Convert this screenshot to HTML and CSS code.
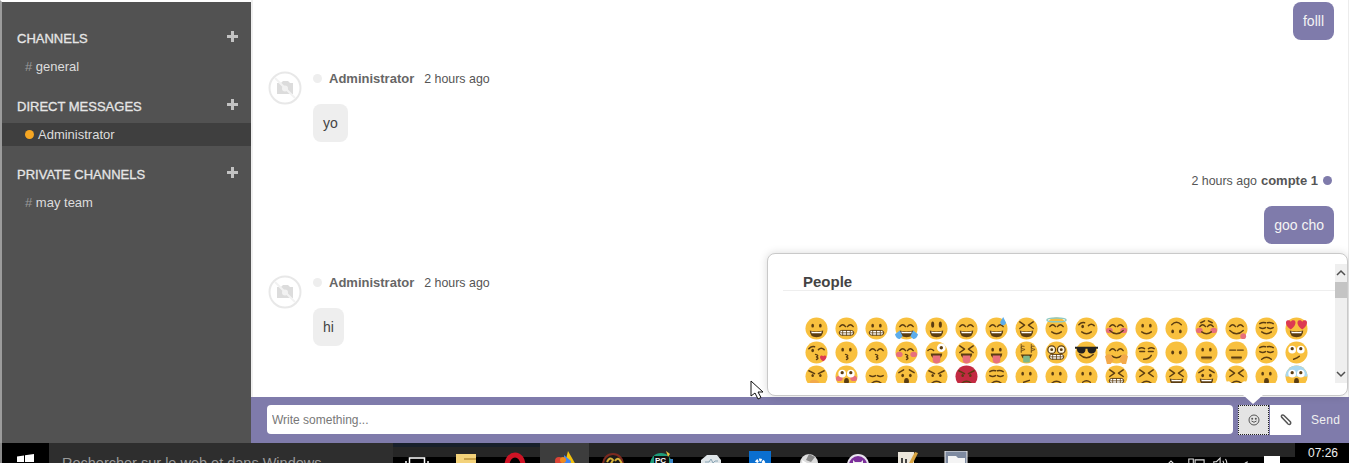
FILE: index.html
```html
<!doctype html>
<html lang="en">
<head>
    <meta charset="UTF-8">
    <meta name="viewport" content="width=device-width, initial-scale=1.0">
    <title>Chat</title>
    <link rel="stylesheet" href="styles.css">
</head>
<body>
<!-- shared emoji parts -->
<svg class="defs" aria-hidden="true">
    <symbol id="f" viewBox="0 0 24 24"><circle class="skin" cx="12" cy="12" r="11.5"/></symbol>
    <symbol id="e-dot" viewBox="0 0 24 24"><ellipse class="ink" cx="8" cy="9" rx="1.4" ry="2"/><ellipse class="ink" cx="16" cy="9" rx="1.4" ry="2"/></symbol>
    <symbol id="e-tall" viewBox="0 0 24 24"><ellipse class="ink" cx="8" cy="8" rx="1.6" ry="3.2"/><ellipse class="ink" cx="16" cy="8" rx="1.6" ry="3.2"/></symbol>
    <symbol id="e-arc" viewBox="0 0 24 24"><path class="line" d="M5 10q3-4 6 0M13 10q3-4 6 0"/></symbol>
    <symbol id="e-x" viewBox="0 0 24 24"><path class="line" d="M5 5l5 3.5-5 3.5M19 5l-5 3.5 5 3.5"/></symbol>
    <symbol id="e-wink" viewBox="0 0 24 24"><path class="line" d="M4 8q3-3 6-2M14 9q3-3 6 0"/><ellipse class="ink" cx="8" cy="10" rx="1.4" ry="1.8"/></symbol>
    <symbol id="e-flat" viewBox="0 0 24 24"><path class="line" d="M5 9.500h6M13 9.500h6"/></symbol>
    <symbol id="e-calm" viewBox="0 0 24 24"><path class="line" d="M5 7q3-2 6-1M19 7q-3-2-6-1M5 11q3 2 6 0M13 11q3 2 6 0"/></symbol>
    <symbol id="e-sad" viewBox="0 0 24 24"><path class="line" d="M4 8l5-3M20 8l-5-3"/><ellipse class="ink" cx="8" cy="11" rx="1.4" ry="1.8"/><ellipse class="ink" cx="16" cy="11" rx="1.4" ry="1.8"/></symbol>
    <symbol id="e-mad" viewBox="0 0 24 24"><path class="line" d="M4 6l6 3M20 6l-6 3"/><ellipse class="ink" cx="8" cy="11" rx="1.3" ry="1.6"/><ellipse class="ink" cx="16" cy="11" rx="1.3" ry="1.6"/></symbol>
    <symbol id="e-big" viewBox="0 0 24 24"><circle class="white" cx="7.500" cy="9" r="4"/><circle class="white" cx="16.500" cy="9" r="4"/><circle class="ink" cx="7.500" cy="8" r="1.700"/><circle class="ink" cx="16.500" cy="8" r="1.700"/></symbol>
    <symbol id="c-pink" viewBox="0 0 24 24"><ellipse class="pink" cx="4.500" cy="14" rx="3.500" ry="2.800"/><ellipse class="pink" cx="19.500" cy="14" rx="3.500" ry="2.800"/></symbol>
    <symbol id="m-open" viewBox="0 0 24 24"><path class="ink" d="M5 14q7 2 14 0q0 7-7 7t-7-7z"/><path class="white" d="M6.500 15q5.500 1.500 11 0l-.5 2h-10z"/></symbol>
    <symbol id="m-teeth" viewBox="0 0 24 24"><rect class="white teeth" x="4.500" y="14" width="15" height="5" rx="2.500"/><path class="line thin" d="M4.500 16.500h15M8 14v5M12 14v5M16 14v5"/></symbol>
    <symbol id="m-smile" viewBox="0 0 24 24"><path class="line" d="M7 15.500q5 4 10 0"/></symbol>
    <symbol id="m-wide" viewBox="0 0 24 24"><path class="line" d="M5 14q7 7 14 0"/></symbol>
    <symbol id="m-kiss" viewBox="0 0 24 24"><path class="line" d="M11 14q4 1 1 2.500q3 1.500 0 2.800"/></symbol>
    <symbol id="m-tongue" viewBox="0 0 24 24"><path class="ink" d="M6 13h12q0 3-2 4.500H8q-2-1.500-2-4.500z"/><path class="pink" d="M8 15h8v4.500a4 4 0 0 1-8 0z"/></symbol>
    <symbol id="m-line" viewBox="0 0 24 24"><path class="line" d="M8 17h8"/></symbol>
    <symbol id="m-zip" viewBox="0 0 24 24"><path class="line" d="M7 17h10"/><path class="line thin" d="M7 18.500h10"/></symbol>
    <symbol id="m-frown" viewBox="0 0 24 24"><path class="line" d="M7 19q5-4 10 0"/></symbol>
    <symbol id="m-oh" viewBox="0 0 24 24"><ellipse class="ink" cx="12" cy="17" rx="2.500" ry="3.500"/></symbol>
</svg>

<div class="app">
    <aside class="sidebar">
        <section class="side-group">
            <h3 class="side-title">CHANNELS <svg class="plus" viewBox="0 0 11 11"><path d="M4 0h3v4h4v3H7v4H4V7H0V4h4z"/></svg></h3>
            <div class="side-item"><span class="hash">#</span> general</div>
        </section>
        <section class="side-group">
            <h3 class="side-title">DIRECT MESSAGES <svg class="plus" viewBox="0 0 11 11"><path d="M4 0h3v4h4v3H7v4H4V7H0V4h4z"/></svg></h3>
            <div class="side-item active"><span class="status"></span>Administrator</div>
        </section>
        <section class="side-group">
            <h3 class="side-title">PRIVATE CHANNELS <svg class="plus" viewBox="0 0 11 11"><path d="M4 0h3v4h4v3H7v4H4V7H0V4h4z"/></svg></h3>
            <div class="side-item"><span class="hash">#</span> may team</div>
        </section>
    </aside>

    <main class="main">
        <div class="messages">
            <div class="msg mine first">
                <div class="bubble">folll</div>
            </div>

            <div class="msg theirs">
                <svg class="avatar" viewBox="0 0 34 34"><use href="#noavatar"/></svg>
                <div class="msg-body">
                    <div class="meta"><span class="dot"></span><b class="who">Administrator</b><span class="when">2 hours ago</span></div>
                    <div class="bubble">yo</div>
                </div>
            </div>

            <div class="msg mine">
                <div class="meta"><span class="when">2 hours ago</span><b class="who">compte 1</b><span class="dot"></span></div>
                <div class="bubble">goo cho</div>
            </div>

            <div class="msg theirs">
                <svg class="avatar" viewBox="0 0 34 34">
                    <defs>
                        <g id="noavatar">
                            <circle class="av-ring" cx="17" cy="17" r="15.500"/>
                            <path class="av-cam" d="M9 12h4l2-2h5l2 2h3v11H9z"/>
                            <circle class="av-lens" cx="17" cy="17.500" r="3"/>
                            <path class="av-slash" d="M7 7l20 20"/>
                        </g>
                    </defs>
                    <use href="#noavatar"/>
                </svg>
                <div class="msg-body">
                    <div class="meta"><span class="dot"></span><b class="who">Administrator</b><span class="when">2 hours ago</span></div>
                    <div class="bubble">hi</div>
                </div>
            </div>
        </div>

        <form class="composer">
            <div class="picker">
                <div class="picker-scroll">
                    <h4 class="picker-title">People</h4>
                    <div class="emoji-grid">
                        <svg class="emoji" viewBox="0 0 24 24"><use href="#f"/><use href="#e-dot"/><use href="#m-open"/></svg>
                        <svg class="emoji" viewBox="0 0 24 24"><use href="#f"/><use href="#e-arc"/><use href="#m-teeth"/></svg>
                        <svg class="emoji" viewBox="0 0 24 24"><use href="#f"/><use href="#e-dot"/><use href="#m-teeth"/></svg>
                        <svg class="emoji" viewBox="0 0 24 24"><use href="#f"/><use href="#e-arc"/><use href="#m-open"/><path class="blue" d="M0 18l5-4 3 6-3 3q-4 0-5-5zM24 18l-5-4-3 6 3 3q4 0 5-5z"/></svg>
                        <svg class="emoji" viewBox="0 0 24 24"><use href="#f"/><use href="#e-tall"/><use href="#m-open"/></svg>
                        <svg class="emoji" viewBox="0 0 24 24"><use href="#f"/><use href="#e-arc"/><use href="#m-open"/></svg>
                        <svg class="emoji" viewBox="0 0 24 24"><use href="#f"/><use href="#e-arc"/><use href="#m-open"/><path class="blue" d="M19 0l-3 5a3 3 0 0 0 6 1z"/></svg>
                        <svg class="emoji" viewBox="0 0 24 24"><use href="#f"/><use href="#e-x"/><use href="#m-open"/></svg>
                        <svg class="emoji" viewBox="0 0 24 24"><use href="#f"/><use href="#e-arc"/><use href="#m-smile"/><ellipse class="halo" cx="12" cy="3" rx="10" ry="2"/></svg>
                        <svg class="emoji" viewBox="0 0 24 24"><use href="#f"/><use href="#e-wink"/><use href="#m-smile"/></svg>
                        <svg class="emoji" viewBox="0 0 24 24"><use href="#f"/><use href="#c-pink"/><use href="#e-arc"/><use href="#m-wide"/></svg>
                        <svg class="emoji" viewBox="0 0 24 24"><use href="#f"/><use href="#e-dot"/><use href="#m-smile"/></svg>
                        <svg class="emoji" viewBox="0 0 24 24"><use href="#f"/><ellipse class="ink" cx="8" cy="15" rx="1.400" ry="2"/><ellipse class="ink" cx="16" cy="15" rx="1.400" ry="2"/><path class="line" d="M7 8q5-5 10 0"/></svg>
                        <svg class="emoji" viewBox="0 0 24 24"><use href="#f"/><use href="#c-pink"/><use href="#e-arc"/><path class="line" d="M6 6l4-2M18 6l-4-2"/><use href="#m-smile"/></svg>
                        <svg class="emoji" viewBox="0 0 24 24"><use href="#f"/><use href="#e-arc"/><use href="#m-wide"/><circle class="pink" cx="19" cy="20" r="3"/></svg>
                        <svg class="emoji" viewBox="0 0 24 24"><use href="#f"/><use href="#e-calm"/><use href="#m-smile"/></svg>
                        <svg class="emoji" viewBox="0 0 24 24"><use href="#f"/><use href="#m-open"/><path class="heart" d="M6 13C0 9 0 4 3 3.500c1.500-.3 2.500.5 3 1.500.5-1 1.500-1.800 3-1.500 3 .5 3 5.500-3 9.500zM18 13c-6-4-6-9-3-9.500 1.500-.3 2.500.5 3 1.500.5-1 1.500-1.800 3-1.500 3 .5 3 5.500-3 9.500z"/></svg>

                        <svg class="emoji" viewBox="0 0 24 24"><use href="#f"/><use href="#e-wink"/><use href="#m-kiss"/><path class="heart" d="M19 21c-4-2-4-6-2-6 1 0 1.500.5 2 1 .5-.5 1-1 2-1 2 0 2 4-2 6z"/></svg>
                        <svg class="emoji" viewBox="0 0 24 24"><use href="#f"/><use href="#e-dot"/><use href="#m-kiss"/></svg>
                        <svg class="emoji" viewBox="0 0 24 24"><use href="#f"/><use href="#e-arc"/><use href="#m-kiss"/></svg>
                        <svg class="emoji" viewBox="0 0 24 24"><use href="#f"/><use href="#c-pink"/><use href="#e-arc"/><use href="#m-kiss"/></svg>
                        <svg class="emoji" viewBox="0 0 24 24"><use href="#f"/><path class="line" d="M3 10q3-3 6 0"/><circle class="white" cx="17" cy="7" r="4.500"/><circle class="ink" cx="17" cy="7" r="1.800"/><use href="#m-tongue"/></svg>
                        <svg class="emoji" viewBox="0 0 24 24"><use href="#f"/><use href="#e-x"/><use href="#m-tongue"/></svg>
                        <svg class="emoji" viewBox="0 0 24 24"><use href="#f"/><use href="#e-dot"/><use href="#m-tongue"/></svg>
                        <svg class="emoji" viewBox="0 0 24 24"><use href="#f"/><path class="line thin" d="M9.500 5.500q-3-1-3 1t3 2-3 2M6.500 3.500v8.500M20 5.500q-3-1-3 1t3 2-3 2M17 3.500v8.500"/><path class="ink" d="M6 14h12l-2 4H8z"/><rect class="green" x="8.500" y="15.500" width="7" height="7" rx="1"/></svg>
                        <svg class="emoji" viewBox="0 0 24 24"><use href="#f"/><circle class="glass" cx="7" cy="9" r="4"/><circle class="glass" cx="17" cy="9" r="4"/><circle class="ink" cx="7" cy="9" r="1.500"/><circle class="ink" cx="17" cy="9" r="1.500"/><use href="#m-teeth"/></svg>
                        <svg class="emoji" viewBox="0 0 24 24"><use href="#f"/><path class="shades" d="M0 6h24v2l-2 0q0 5-5 5-4 0-4-5h-2q0 5-4 5-5 0-5-5H0z"/><use href="#m-wide"/></svg>
                        <svg class="emoji" viewBox="0 0 24 24"><use href="#f"/><use href="#e-arc"/><use href="#m-smile"/><path class="hand" d="M0 16q3-4 7-1l2 5-3 4H2zM24 16q-3-4-7-1l-2 5 3 4h4z"/></svg>
                        <svg class="emoji" viewBox="0 0 24 24"><use href="#f"/><path class="line" d="M4 8q3-2 6 0M14 8q3-2 6 0M5 11h5M14 11h5M9 19q6 0 8-4"/></svg>
                        <svg class="emoji" viewBox="0 0 24 24"><use href="#f"/><ellipse class="ink" cx="8" cy="12" rx="1.500" ry="2"/><ellipse class="ink" cx="16" cy="12" rx="1.500" ry="2"/></svg>
                        <svg class="emoji" viewBox="0 0 24 24"><use href="#f"/><use href="#e-dot"/><use href="#m-zip"/></svg>
                        <svg class="emoji" viewBox="0 0 24 24"><use href="#f"/><use href="#e-flat"/><use href="#m-zip"/></svg>
                        <svg class="emoji" viewBox="0 0 24 24"><use href="#f"/><use href="#e-calm"/><use href="#m-frown"/></svg>
                        <svg class="emoji" viewBox="0 0 24 24"><use href="#f"/><use href="#e-big"/><path class="line" d="M9 19q4-1 6-3"/></svg>

                        <svg class="emoji" viewBox="0 0 24 24"><use href="#f"/><use href="#e-mad"/><path class="hand" d="M5 17q4-3 9 0l3 7H7z"/></svg>
                        <svg class="emoji" viewBox="0 0 24 24"><use href="#f"/><use href="#c-pink"/><use href="#e-big"/><use href="#m-oh"/></svg>
                        <svg class="emoji" viewBox="0 0 24 24"><use href="#f"/><path class="line" d="M5 11q3 2 6 0M13 11q3 2 6 0"/><use href="#m-frown"/></svg>
                        <svg class="emoji" viewBox="0 0 24 24"><use href="#f"/><use href="#e-sad"/><use href="#m-oh"/></svg>
                        <svg class="emoji" viewBox="0 0 24 24"><use href="#f"/><use href="#e-mad"/><use href="#m-frown"/></svg>
                        <svg class="emoji" viewBox="0 0 24 24"><circle class="rage" cx="12" cy="12" r="11.500"/><use href="#e-mad"/><use href="#m-frown"/></svg>
                        <svg class="emoji" viewBox="0 0 24 24"><use href="#f"/><use href="#e-calm"/><use href="#m-frown"/></svg>
                        <svg class="emoji" viewBox="0 0 24 24"><use href="#f"/><use href="#e-dot"/><path class="line" d="M9 18l6-2"/></svg>
                        <svg class="emoji" viewBox="0 0 24 24"><use href="#f"/><use href="#e-dot"/><use href="#m-frown"/></svg>
                        <svg class="emoji" viewBox="0 0 24 24"><use href="#f"/><use href="#e-dot"/><path class="line" d="M8 18q4-3 8 0"/></svg>
                        <svg class="emoji" viewBox="0 0 24 24"><use href="#f"/><use href="#e-x"/><use href="#m-teeth"/></svg>
                        <svg class="emoji" viewBox="0 0 24 24"><use href="#f"/><use href="#e-x"/><use href="#m-frown"/></svg>
                        <svg class="emoji" viewBox="0 0 24 24"><use href="#f"/><use href="#e-x"/><use href="#m-open"/></svg>
                        <svg class="emoji" viewBox="0 0 24 24"><use href="#f"/><use href="#e-sad"/><use href="#m-open"/></svg>
                        <svg class="emoji" viewBox="0 0 24 24"><use href="#f"/><use href="#e-x"/><path class="white" d="M1 18q4-3 6 2l-3 3zM23 18q-4-3-6 2l3 3z"/><use href="#m-frown"/></svg>
                        <svg class="emoji" viewBox="0 0 24 24"><use href="#f"/><use href="#e-dot"/><use href="#m-oh"/></svg>
                        <svg class="emoji" viewBox="0 0 24 24"><use href="#f"/><path class="ice" d="M.500 12a11.500 11.500 0 0 1 23 0z"/><use href="#e-big"/><use href="#m-oh"/></svg>
                    </div>
                </div>
                <div class="picker-bar">
                    <svg class="bar-arrow" viewBox="0 0 12 12"><path d="M2 8l4-4 4 4"/></svg>
                    <div class="bar-thumb"></div>
                    <svg class="bar-arrow bottom" viewBox="0 0 12 12"><path d="M2 4l4 4 4-4"/></svg>
                </div>
            </div>
            <span class="picker-tip"></span>

            <input class="composer-input" type="text" placeholder="Write something...">
            <button class="tool on" type="button">
                <svg class="tool-icon" viewBox="0 0 12 12"><circle class="tool-line" cx="6" cy="6" r="5"/><circle cx="4.200" cy="4.800" r="1"/><circle cx="7.800" cy="4.800" r="1"/><path class="tool-line" d="M3.500 7q2.500 2.500 5 0"/></svg>
            </button>
            <button class="tool" type="button">
                <svg class="tool-icon" viewBox="0 0 12 12"><path class="tool-line clip" d="M2 3.500l6 6.500q1.500 1 2.300 0t0-2.300L4 1.500Q3 .5 2 1.200t-.3 2l6 6.300"/></svg>
            </button>
            <span class="send">Send</span>
        </form>
    </main>
</div>

<footer class="taskbar">
    <div class="start">
        <svg class="win" viewBox="0 0 17 17"><path d="M0 2.500l7-1v6.500H0zM8 1.300l9-1.300v8H8zM0 9h7v6.500l-7-1zM8 9h9v8l-9-1.300z"/></svg>
    </div>
    <div class="search">Rechercher sur le web et dans Windows</div>
    <div class="tasks">
        <div class="task"><svg viewBox="0 0 24 24"><rect class="tv" x="4.500" y="7" width="15" height="14"/><path class="tv" d="M1 10v9M23 10v9"/></svg></div>
        <div class="task"><svg viewBox="0 0 24 24"><path fill="#f3d27a" d="M2 3h20v21H2z"/><path fill="#c9a24a" d="M10 7h12v2H10z"/></svg></div>
        <div class="task"><svg viewBox="0 0 24 24"><ellipse cx="12" cy="14" rx="8" ry="10" fill="none" stroke="#cf1325" stroke-width="5"/></svg></div>
        <div class="task lit"><svg viewBox="0 0 24 24"><path fill="#f4c20d" d="M16 0l8 14v10H10z"/><path fill="#4285f4" d="M12 4l7 6-2 14H12z"/><circle fill="#db4437" cx="7" cy="10" r="4"/><circle fill="#f08a1d" cx="11" cy="9" r="3"/></svg></div>
        <div class="task"><svg viewBox="0 0 24 24"><circle cx="12" cy="13" r="10" fill="#1b1b1b" stroke="#7c2a20" stroke-width="2"/><path fill="none" stroke="#d7b13a" stroke-width="2" d="M6 11q3-6 6-2l-4 7M14 10q3-5 6 1t-4 5"/><path fill="none" stroke="#2f9d78" stroke-width="2" d="M19 18l3 4"/></svg></div>
        <div class="task"><svg viewBox="0 0 24 24"><circle cx="11" cy="13" r="11" fill="#1f9c7a"/><rect x="4" y="5" width="15" height="15" fill="#111"/><text class="pc" x="5" y="12">PC</text><path fill="#e7c23f" d="M16 0l4 3-2 3z"/><path fill="#3a86c8" d="M20 8h3v4h-3z"/></svg></div>
        <div class="task"><svg viewBox="0 0 24 24"><path fill="#dfe5e8" d="M2 9l6-5h10l4 5v15H2z"/><path fill="none" stroke="#8aa5b5" d="M6 11h4l2-3 2 4 2-2h3"/></svg></div>
        <div class="task"><svg viewBox="0 0 24 24"><rect x="1" y="0" width="22" height="24" fill="#0a6fd0"/><circle cx="12" cy="13" r="4" fill="none" stroke="#fff" stroke-width="3" stroke-dasharray="2.500 1"/></svg></div>
        <div class="task"><svg viewBox="0 0 24 24"><circle cx="12" cy="12" r="9" fill="#ddd"/><path fill="#888" d="M12 3l6 3-4 5-5-2z"/><path fill="#fff" d="M5 9l5 3-4 4z"/></svg></div>
        <div class="task"><svg viewBox="0 0 24 24"><circle cx="12" cy="14" r="11" fill="#e9e4ef"/><circle cx="12" cy="14" r="9" fill="#7c2f9b"/><path fill="#eee" d="M7 9l2 2h6l2-2v8H7z"/></svg></div>
        <div class="task"><svg viewBox="0 0 24 24"><path fill="#ece7dc" d="M3 1h16v23H3z"/><path fill="#d9a441" d="M13 14l7-13 3 1-7 14z"/><path fill="#444" d="M6 7h2v6H6zM10 8h2v6h-2z"/></svg></div>
        <div class="task"><svg viewBox="0 0 24 24"><rect x="1" y="0" width="22" height="24" fill="#7e8aa0" stroke="#eee"/><path fill="#f4f4f4" d="M4 5h8l2 2h7v14H4z"/></svg></div>
    </div>
    <div class="tray">
        <svg viewBox="0 0 12 12" class="tray-icon small"><path d="M2 8l4-4 4 4"/></svg>
        <svg viewBox="0 0 20 14" class="tray-icon"><path d="M2 2h5v12H2zM9 3h10v9H9z"/></svg>
        <svg viewBox="0 0 20 14" class="tray-icon"><path d="M2 5h3l4-4v12L5 9H2zM12 4q2 3 0 6M15 2q3 5 0 10"/></svg>
        <svg viewBox="0 0 20 14" class="tray-icon"><path d="M4 14q1-6 8-9M8 14q1-3 4-4"/></svg>
        <div class="notif"></div>
    </div>
    <div class="clock">07:26</div>
</footer>

<svg class="cursor" viewBox="0 0 14 20"><path d="M1 1v15l4-3 3 6 3-1.500-3-5.500h5z"/></svg>
</body>
</html>
```

FILE: styles.css
```css
* {
    box-sizing: border-box;
}
html, body {
    height: 100%;
}
body {
    font-family: "Liberation Sans", Arial, sans-serif;
    background-color: #ffffff;
    display: flex;
    flex-direction: column;
    margin: 0;
    overflow: hidden;
}
.defs {
    position: absolute;
    width: 0;
    height: 0;
}
.app {
    display: flex;
    height: 443px;
    flex: none;
}

/* sidebar */
.sidebar {
    width: 251px;
    flex: none;
    background-color: #525252;
    border-left: 2px solid #9c9c9c;
    border-top: 2px solid #ffffff;
    padding-top: 26px;
    color: #e2e2e2;
}
.side-group {
    margin-bottom: 18px;
}
.side-title {
    display: flex;
    align-items: center;
    justify-content: space-between;
    height: 20px;
    margin: 0 0 7px;
    padding: 0 13px 0 15px;
    font-size: 13px;
    font-weight: normal;
    -webkit-text-stroke: 0.3px #e6e6e6;
    color: #e6e6e6;
}
.plus {
    width: 11px;
    height: 11px;
    margin-top: -4px;
    fill: #c2c2c2;
}
.side-item {
    height: 23px;
    line-height: 24px;
    padding-left: 23px;
    font-size: 13px;
    color: #dddddd;
}
.side-item.active {
    background-color: #3f3f3f;
}
.hash {
    color: #9a9a9a;
}
.status {
    display: inline-block;
    width: 9px;
    height: 9px;
    margin-right: 4px;
    border-radius: 50%;
    background-color: #f5a623;
}

/* messages */
.main {
    flex: 1;
    min-width: 0;
    display: flex;
    flex-direction: column;
}
.messages {
    flex: 1;
    min-height: 0;
    border-left: 2px solid #f0f0f0;
    border-right: 1px solid #ececec;
    padding: 0 14px 0 15px;
}
.msg {
    display: flex;
    margin-top: 28px;
}
.msg.first {
    margin-top: 2px;
}
.msg.mine {
    flex-direction: column;
    align-items: flex-end;
}
.msg.theirs {
    gap: 11px;
}
.msg-body {
    display: flex;
    flex-direction: column;
    align-items: flex-start;
}
.avatar {
    width: 34px;
    height: 34px;
    margin-top: 3px;
    flex: none;
}
.av-ring {
    fill: none;
    stroke: #e8e8e8;
    stroke-width: 2;
}
.av-cam {
    fill: #dcdcdc;
}
.av-lens {
    fill: #f2f2f2;
}
.av-slash {
    stroke: #f2f2f2;
    stroke-width: 2;
}
.meta {
    display: flex;
    align-items: center;
    height: 20px;
    margin-bottom: 16px;
    font-size: 12.4px;
    color: #555555;
}
.meta .when {
    padding-top: 1px;
}
.meta .dot {
    width: 9px;
    height: 9px;
    border-radius: 50%;
    background-color: #eeeeee;
}
.msg.theirs .who {
    margin: 0 10px 0 7px;
    font-size: 13px;
    color: #666666;
}
.msg.mine .who {
    margin: 0 5px 0 4px;
    font-size: 13px;
    color: #555555;
}
.msg.mine .dot {
    margin-right: 2px;
    background-color: #7f7bab;
}
.bubble {
    height: 38px;
    line-height: 38px;
    padding: 0 10px;
    border-radius: 8px;
    font-size: 14px;
    background-color: #eeeeee;
    color: #444444;
}
.mine .bubble {
    background-color: #7f7bab;
    color: #f4f4f4;
}

/* composer */
.composer {
    position: relative;
    display: flex;
    align-items: flex-start;
    height: 46px;
    flex: none;
    padding: 8px 0 0 16px;
    background-color: #7f7bab;
}
.composer-input {
    width: 966px;
    height: 29px;
    padding: 0 5px;
    border: none;
    border-radius: 4px;
    font-family: inherit;
    font-size: 12px;
    background-color: #ffffff;
}
.composer-input::placeholder {
    color: #777777;
}
.tool {
    width: 31px;
    height: 30px;
    padding: 0;
    border: none;
    display: flex;
    align-items: center;
    justify-content: center;
    background-color: #ffffff;
}
.tool.on {
    margin-left: 5px;
    margin-right: 1px;
    background-color: #e4e4e4;
    outline: 1px dotted #222222;
    outline-offset: -1px;
}
.tool-icon {
    width: 12px;
    height: 12px;
    fill: #555555;
}
.tool-line {
    fill: none;
    stroke: #555555;
    stroke-width: 1;
}
.tool-line.clip {
    stroke-width: 1.5;
}
.send {
    margin: 0 0 0 10px;
    line-height: 30px;
    font-size: 12px;
    letter-spacing: 0.3px;
    color: #f0f0f0;
}

/* emoji picker */
.picker {
    position: absolute;
    right: 1px;
    bottom: 47px;
    display: flex;
    width: 581px;
    height: 143px;
    padding: 10px 0 0 15px;
    border: 1px solid #c9c9c9;
    border-radius: 8px;
    background-color: #ffffff;
    box-shadow: 0 0 8px rgba(0, 0, 0, 0.15);
}
.picker-scroll {
    flex: 1;
    height: 119px;
    overflow: hidden;
}
.picker-title {
    height: 27px;
    margin: 0 0 26px;
    padding: 9px 0 0 20px;
    border-bottom: 1px solid #eeeeee;
    font-size: 15px;
    color: #444444;
}
.emoji-grid {
    display: grid;
    grid-template-columns: repeat(17, 30px);
    grid-auto-rows: 24px;
    padding-left: 22px;
}
.emoji {
    width: 23px;
    height: 23px;
}
.emoji use {
    width: 24px;
    height: 24px;
}
.skin {
    fill: #f8c03e;
}
.rage {
    fill: #c32a42;
}
.ink {
    fill: #5b3d12;
}
.white {
    fill: #ffffff;
}
.pink {
    fill: #e8707c;
}
.heart {
    fill: #dd3a52;
}
.blue {
    fill: #5dadec;
}
.ice {
    fill: #a9d8f0;
}
.green {
    fill: #7fb88a;
}
.hand {
    fill: #f3a94a;
}
.halo {
    fill: none;
    stroke: #8fc9c0;
    stroke-width: 1.5;
}
.shades {
    fill: #222222;
}
.glass {
    fill: #fff6dd;
    stroke: #5b3d12;
    stroke-width: 1.3;
}
.line {
    fill: none;
    stroke: #5b3d12;
    stroke-width: 1.5;
    stroke-linecap: round;
    stroke-linejoin: round;
}
.line.thin {
    stroke-width: 0.8;
}
.teeth {
    stroke: #5b3d12;
    stroke-width: 1;
}
.picker-bar {
    display: flex;
    flex-direction: column;
    width: 12px;
    height: 119px;
    flex: none;
    background-color: #efefef;
}
.bar-arrow {
    width: 12px;
    height: 12px;
    margin: 3px 0;
    fill: none;
    stroke: #505050;
    stroke-width: 1.5;
}
.bar-arrow.bottom {
    margin-top: auto;
}
.bar-thumb {
    height: 16px;
    background-color: #c4c4c4;
}
.picker-tip {
    position: absolute;
    left: 992px;
    top: -2px;
    border-style: solid;
    border-width: 9px 10px 0;
    border-color: #ffffff transparent transparent;
}

/* windows taskbar, only its top shows */
.taskbar {
    display: flex;
    height: 20px;
    flex: none;
    overflow: hidden;
    border-left: 2px solid #8a8a8a;
    background-color: #000000;
}
.start {
    width: 47px;
    flex: none;
    padding: 11px 0 0 15px;
    background-color: #000000;
}
.win {
    display: block;
    width: 17px;
    height: 17px;
    fill: #ffffff;
}
.search {
    width: 344px;
    flex: none;
    padding: 12px 0 0 13px;
    font-size: 14.5px;
    line-height: 16px;
    color: #9a9a9a;
    background-color: #2e2e2e;
}
.tasks {
    display: flex;
    flex: none;
    width: 706px;
    background: linear-gradient(#18202b, #18202b) 0 0 / 147px 4px no-repeat, linear-gradient(#262626 14px, #000000 14px);
}
.task {
    width: 49px;
    flex: none;
    padding: 8px 0 0 12px;
}
.task.lit {
    background-color: #3d3d3d;
}
.task svg {
    display: block;
    width: 24px;
    height: 24px;
}
.tv {
    fill: none;
    stroke: #ffffff;
    stroke-width: 1.5;
}
.pc {
    font-size: 8px;
    font-weight: bold;
    fill: #ffffff;
}
.tray {
    display: flex;
    flex: 1;
    align-items: flex-start;
    justify-content: flex-end;
    gap: 7px;
    padding: 14px 15px 0 0;
    background: linear-gradient(#262626 14px, #000000 14px);
}
.tray-icon {
    width: 18px;
    height: 13px;
    fill: none;
    stroke: #dddddd;
    stroke-width: 1.2;
}
.tray-icon.small {
    width: 12px;
    height: 12px;
    margin-right: 3px;
}
.notif {
    width: 16px;
    height: 14px;
    margin-left: 2px;
    margin-top: -1px;
    background-color: #ffffff;
}
.clock {
    width: 54px;
    flex: none;
    padding: 3px 0 0 13px;
    font-size: 12px;
    line-height: 14px;
    color: #f0f0f0;
    background-color: #000000;
}
.cursor {
    position: absolute;
    left: 750px;
    top: 380px;
    width: 14px;
    height: 20px;
    fill: #ffffff;
    stroke: #111111;
    stroke-width: 1;
}
```
